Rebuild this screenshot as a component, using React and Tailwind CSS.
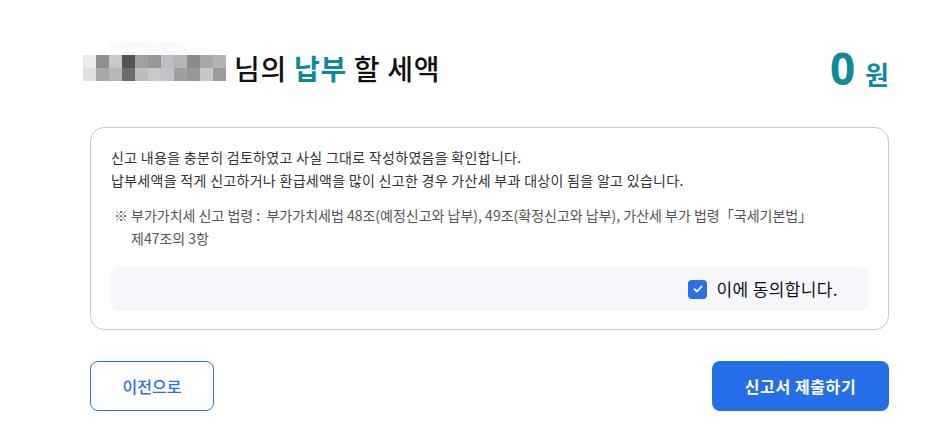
// 신고서 최종 확인 화면

const MOSAIC = [
  ['#ffffff', '#ffffff', '#fbfbfb', '#fafafa', '#fafafa', '#fbfbfb', '#f8faf9', '#fbfbfb', '#fcfcfc', '#ffffff', '#ffffff'],
  ['#ebebeb', '#909090', '#c9c8c6', '#545454', '#a0a0a0', '#969696', '#bcbec6', '#b8b5b0', '#8a8b8f', '#aaa8a4', '#b3b3b5'],
  ['#e0e0e0', '#a7a7a7', '#b8b5b2', '#6b6b6b', '#babcbf', '#c9c8c4', '#c2c3c8', '#a19e9b', '#969697', '#c8c7c3', '#9b9b9f'],
];

function Mosaic() {
  return (
    <div className="flex flex-col">
      {MOSAIC.map((row, i) => (
        <div key={i} className="flex h-[13px]">
          {row.map((c, j) => (
            <div key={j} className="w-[13px] h-full" style={{ backgroundColor: c }} />
          ))}
        </div>
      ))}
    </div>
  );
}

export default function App() {
  return (
    <div className="w-[925px] h-[434px] bg-white overflow-hidden font-['Noto_Sans_CJK_KR','Noto_Sans',sans-serif] text-[#222]">
      <div className="ml-[90px] w-[799px]">
        {/* 제목 */}
        <div className="flex items-center justify-between h-[127px] pt-[8px]">
          <div className="flex items-center -ml-[7px]">
            <div className="mt-[-12px]">
              <Mosaic />
            </div>
            <h1 className="ml-[8px] text-[28px] font-medium text-[#111] leading-none tracking-[0.7px]">
              님의 <span className="text-[#0e8a9a] font-bold">납부</span> 할 세액
            </h1>
          </div>
          <div className="flex items-baseline text-[#0e8a9a] font-bold">
            <span className="text-[44px] leading-none font-['Noto_Sans',sans-serif]">0</span>
            <span className="ml-[10px] text-[26px] leading-none">원</span>
          </div>
        </div>

        {/* 확인 카드 */}
        <div className="border border-[#c9c9c9] rounded-[14px] px-[20px] pt-[18px] pb-[18px]">
          <div className="text-[14px] leading-[23px] text-[#333] tracking-[0.3px]">
            <p>신고 내용을 충분히 검토하였고 사실 그대로 작성하였음을 확인합니다.</p>
            <p>납부세액을 적게 신고하거나 환급세액을 많이 신고한 경우 가산세 부과 대상이 됨을 알고 있습니다.</p>
          </div>
          <div className="mt-[12px] flex text-[14px] leading-[23px] text-[#555]">
            <span className="ml-[3px] w-[17px] shrink-0">※</span>
            <p>
              부가가치세 신고 법령 :&nbsp; 부가가치세법 48조(예정신고와 납부), 49조(확정신고와 납부), 가산세 부가 법령「국세기본법」
              <br />
              제47조의 3항
            </p>
          </div>
          <div className="mt-[17px] h-[44px] rounded-[8px] bg-[#f6f7fb] flex items-center justify-end pr-[30px]">
            <label className="flex items-center gap-[9px] text-[17px] text-[#111] tracking-[0.4px]">
              <span className="w-[19px] h-[19px] rounded-[4px] bg-[#2a6ee8] flex items-center justify-center">
                <svg width="12" height="12" viewBox="0 0 12 12" fill="none">
                  <path d="M2.5 6.2 L5 8.5 L9.5 3.5" stroke="white" strokeWidth="1.8" strokeLinecap="round" strokeLinejoin="round" />
                </svg>
              </span>
              이에 동의합니다.
            </label>
          </div>
        </div>

        {/* 버튼 */}
        <div className="mt-[31px] flex justify-between">
          <button className="w-[124px] h-[50px] rounded-[8px] border border-[#2a6ee8] text-[#2a6ee8] text-[16px] font-medium bg-white">
            이전으로
          </button>
          <button className="w-[177px] h-[50px] rounded-[8px] bg-[#256ee8] text-white text-[16px] font-bold tracking-[0.6px]">
            신고서 제출하기
          </button>
        </div>
      </div>
    </div>
  );
}
